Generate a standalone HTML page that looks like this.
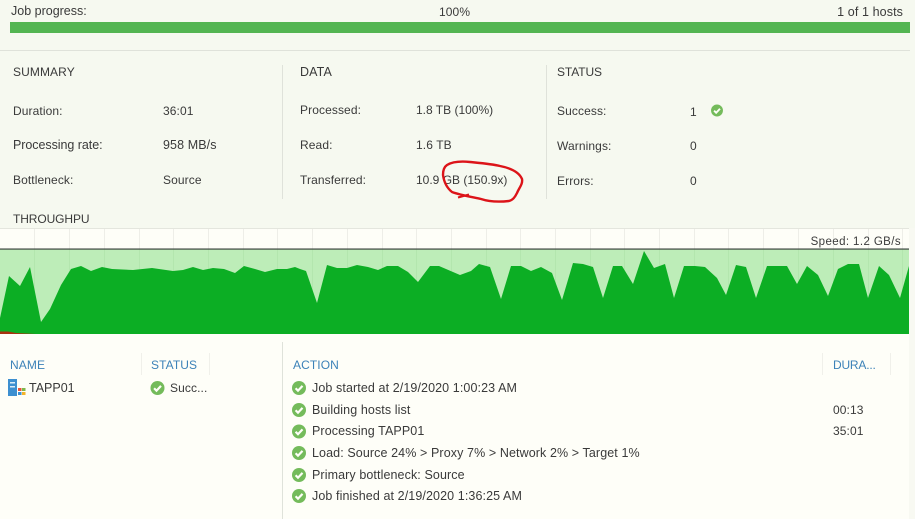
<!DOCTYPE html>
<html><head><meta charset="utf-8"><style>
html,body{margin:0;padding:0}
body{width:915px;height:519px;overflow:hidden;position:relative;background:#fefef8;font-family:"Liberation Sans",sans-serif;font-size:12px;color:#3a3a3a}
#top{position:absolute;left:0;top:0;width:915px;height:228px;background:#f6f9f0}
#side{position:absolute;left:909px;top:228px;width:6px;height:291px;background:#f8f9f2}
.t{position:absolute;line-height:14px;height:14px;white-space:nowrap;letter-spacing:.1px}
.a{font-size:12.5px}
.b{color:#3c82b8;letter-spacing:.1px}
.l{position:absolute;background:#dfe2da}
svg{position:absolute;left:0;top:0}
</style></head><body>
<div id="top"></div>
<div id="side"></div>
<div class="t a" style="left:11px;top:4px;letter-spacing:0">Job progress:</div>
<div class="t" style="left:439px;top:5px">100%</div>
<div class="t a" style="right:12px;top:5px">1 of 1 hosts</div>
<div class="l" style="left:10px;top:22px;width:900px;height:11px;background:#53b552"></div>
<div class="l" style="left:0;top:50px;width:910px;height:1px"></div>
<div class="l" style="left:282px;top:65px;width:1px;height:134px"></div>
<div class="l" style="left:546px;top:65px;width:1px;height:134px"></div>

<div class="t" style="left:13px;top:65px">SUMMARY</div>
<div class="t" style="left:13px;top:104px">Duration:</div><div class="t" style="left:163px;top:104px">36:01</div>
<div class="t a" style="left:13px;top:138px;letter-spacing:-.05px">Processing rate:</div><div class="t a" style="left:163px;top:138px">958 MB/s</div>
<div class="t" style="left:13px;top:173px">Bottleneck:</div><div class="t" style="left:163px;top:173px">Source</div>

<div class="t a" style="left:300px;top:65px">DATA</div>
<div class="t" style="left:300px;top:103px">Processed:</div><div class="t" style="left:416px;top:103px;letter-spacing:0">1.8 TB (100%)</div>
<div class="t" style="left:300px;top:138px">Read:</div><div class="t" style="left:416px;top:138px">1.6 TB</div>
<div class="t" style="left:300px;top:173px">Transferred:</div><div class="t" style="left:416px;top:173px;letter-spacing:0">10.9 GB (150.9x)</div>

<div class="t" style="left:557px;top:65px;letter-spacing:-.1px">STATUS</div>
<div class="t" style="left:557px;top:104px">Success:</div><div class="t" style="left:690px;top:105px">1</div>
<div class="t" style="left:557px;top:139px">Warnings:</div><div class="t" style="left:690px;top:139px">0</div>
<div class="t" style="left:557px;top:174px">Errors:</div><div class="t" style="left:690px;top:174px">0</div>

<div class="t" style="left:13px;top:212px;letter-spacing:-.1px">THROUGHPU</div>

<svg width="915" height="519" viewBox="0 0 915 519">
<defs><g id="c"><circle r="7" fill="#74bb5b"/><path d="M-3.4 0.2L-1 2.7L3.5-2.1" fill="none" stroke="#fefef8" stroke-width="2.2"/></g></defs>
<rect x="0" y="229" width="909" height="20" fill="#fefef8"/>
<line x1="0" y1="228.5" x2="909" y2="228.5" stroke="#e4e6de"/>
<rect x="0" y="249" width="909" height="85" fill="#bdedb8"/>
<g stroke="#eeeee8" stroke-width="1">
<path d="M34.5 229V249M69.5 229V249M104.5 229V249M139.5 229V249M173.5 229V249M208.5 229V249M243.5 229V249M277.5 229V249M312.5 229V249M347.5 229V249M382.5 229V249M416.5 229V249M451.5 229V249M486.5 229V249M520.5 229V249M555.5 229V249M590.5 229V249M624.5 229V249M659.5 229V249M694.5 229V249M728.5 229V249M763.5 229V249M798.5 229V249M833.5 229V249M868.5 229V249M902.5 229V249"/>
</g>
<g stroke="#b3e6ae" stroke-width="1">
<path d="M34.5 249V334M69.5 249V334M104.5 249V334M139.5 249V334M173.5 249V334M208.5 249V334M243.5 249V334M277.5 249V334M312.5 249V334M347.5 249V334M382.5 249V334M416.5 249V334M451.5 249V334M486.5 249V334M520.5 249V334M555.5 249V334M590.5 249V334M624.5 249V334M659.5 249V334M694.5 249V334M728.5 249V334M763.5 249V334M798.5 249V334M833.5 249V334M868.5 249V334M902.5 249V334"/>
</g>
<rect x="0" y="248.5" width="909" height="1.1" fill="#2f3532"/>
<polygon fill="#0cae24" points="0,318 9,276 20,286 30,267 41,322 50,309 61,285 71,269 81,266 91,271 102,267 112,269 133,270 152,268 173,271 183,270 193,267 203,270 213,268 224,269 235,273 244,266 255,269 265,272 277,269 287,269 295,267 300,269 306,271 317,303 327,265 337,268 347,268 357,265 368,267 378,270 387,266 398,266 408,272 418,282 430,266 439,266 460,275 471,271 479,264 490,267 501,299 511,266 521,266 531,271 541,267 552,273 562,300 573,263 583,264 593,267 603,298 613,266 622,266 633,284 644,251 654,268 665,264 674,298 684,266 695,266 705,267 717,278 726,295 736,265 746,267 756,298 767,266 787,266 797,284 807,266 818,275 828,296 838,269 848,264 859,264 868,298 879,266 889,275 900,298 909,266 909,334 0,334"/>
<polygon fill="#a8320f" points="0,334 0,331.5 8,331.5 16,333 36,334"/>
<path d="M447 165C452 162 460 161 470 162C480 163 492 164 500 166C510 168 519 172 522 179C523 184 519 188 517 193C515 197 513 200 509 201C500 202 490 202 481 199C472 197 460 195 452 192C447 188 444 182 443 175C443 170 444 167 447 165Z" fill="none" stroke="#dc1419" stroke-width="2.4"/>
<path d="M458 197.5L469 194.5" fill="none" stroke="#dc1419" stroke-width="2.2"/>
<g transform="translate(717 110.5) scale(.85)"><use href="#c"/></g>
<use href="#c" x="157.5" y="388"/>
<use href="#c" x="299" y="388"/>
<use href="#c" x="299" y="410"/>
<use href="#c" x="299" y="431.5"/>
<use href="#c" x="299" y="453"/>
<use href="#c" x="299" y="475"/>
<use href="#c" x="299" y="496"/>
<rect x="8" y="379" width="9" height="17" fill="#3d8fd0"/>
<rect x="10" y="382" width="5" height="1.5" fill="#dcecf7"/>
<rect x="10" y="386" width="5" height="1.5" fill="#dcecf7"/>
<rect x="18" y="388" width="3.5" height="3" fill="#e8533a"/>
<rect x="22" y="388" width="3.5" height="3" fill="#7db84a"/>
<rect x="18" y="392" width="3.5" height="3" fill="#3d8fd0"/>
<rect x="22" y="392" width="3.5" height="3" fill="#f3b32a"/>
</svg>

<div class="t" style="right:14px;top:235px;letter-spacing:.4px;font-size:11.5px">Speed: 1.2 GB/s</div>

<div class="l" style="left:282px;top:342px;width:1px;height:177px"></div>
<div class="l" style="left:141px;top:353px;width:1px;height:22px;background:#f0f0ea"></div>
<div class="l" style="left:209px;top:353px;width:1px;height:22px;background:#f0f0ea"></div>
<div class="l" style="left:822px;top:353px;width:1px;height:22px;background:#f0f0ea"></div>
<div class="l" style="left:890px;top:353px;width:1px;height:22px;background:#f0f0ea"></div>

<div class="t b" style="left:10px;top:358px">NAME</div>
<div class="t b" style="left:151px;top:358px">STATUS</div>
<div class="t b" style="left:293px;top:358px">ACTION</div>
<div class="t b" style="left:833px;top:358px;letter-spacing:-.2px">DURA...</div>

<div class="t a" style="left:29px;top:381px;letter-spacing:0">TAPP01</div>
<div class="t" style="left:170px;top:381px">Succ...</div>

<div class="t a" style="left:312px;top:381px">Job started at 2/19/2020 1:00:23 AM</div>
<div class="t a" style="left:312px;top:403px">Building hosts list</div>
<div class="t a" style="left:312px;top:424px">Processing TAPP01</div>
<div class="t a" style="left:312px;top:446px">Load: Source 24% &gt; Proxy 7% &gt; Network 2% &gt; Target 1%</div>
<div class="t a" style="left:312px;top:468px">Primary bottleneck: Source</div>
<div class="t a" style="left:312px;top:489px">Job finished at 2/19/2020 1:36:25 AM</div>
<div class="t" style="left:833px;top:403px">00:13</div>
<div class="t" style="left:833px;top:424px">35:01</div>
</body></html>
